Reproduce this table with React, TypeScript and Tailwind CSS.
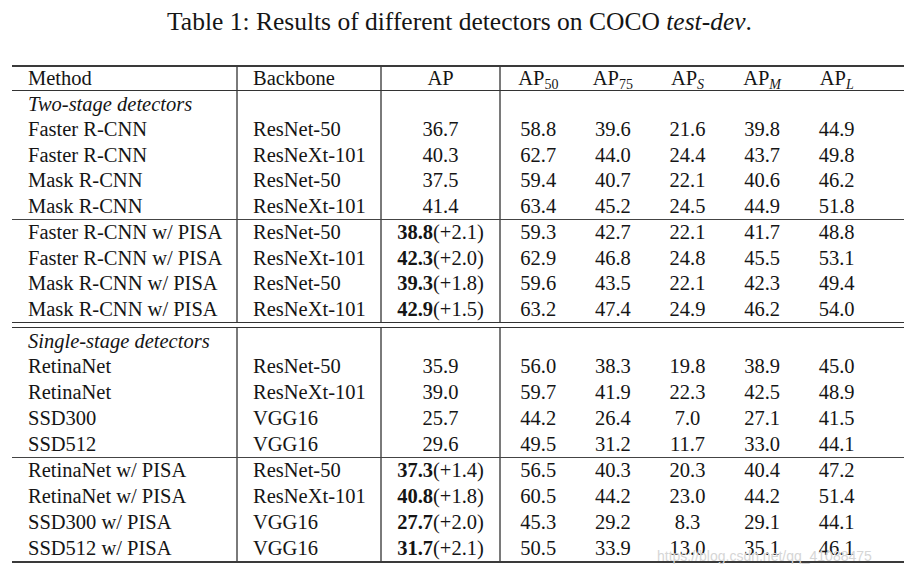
import type { ReactNode } from "react";

type Row = {
  method: ReactNode;
  backbone?: string;
  ap?: string;
  gain?: string;
  vals?: string[];
};

const TWO_STAGE: Row[] = [
  { method: <i>Two-stage detectors</i> },
  { method: "Faster R-CNN", backbone: "ResNet-50", ap: "36.7", vals: ["58.8", "39.6", "21.6", "39.8", "44.9"] },
  { method: "Faster R-CNN", backbone: "ResNeXt-101", ap: "40.3", vals: ["62.7", "44.0", "24.4", "43.7", "49.8"] },
  { method: "Mask R-CNN", backbone: "ResNet-50", ap: "37.5", vals: ["59.4", "40.7", "22.1", "40.6", "46.2"] },
  { method: "Mask R-CNN", backbone: "ResNeXt-101", ap: "41.4", vals: ["63.4", "45.2", "24.5", "44.9", "51.8"] },
];

const TWO_STAGE_PISA: Row[] = [
  { method: "Faster R-CNN w/ PISA", backbone: "ResNet-50", ap: "38.8", gain: "(+2.1)", vals: ["59.3", "42.7", "22.1", "41.7", "48.8"] },
  { method: "Faster R-CNN w/ PISA", backbone: "ResNeXt-101", ap: "42.3", gain: "(+2.0)", vals: ["62.9", "46.8", "24.8", "45.5", "53.1"] },
  { method: "Mask R-CNN w/ PISA", backbone: "ResNet-50", ap: "39.3", gain: "(+1.8)", vals: ["59.6", "43.5", "22.1", "42.3", "49.4"] },
  { method: "Mask R-CNN w/ PISA", backbone: "ResNeXt-101", ap: "42.9", gain: "(+1.5)", vals: ["63.2", "47.4", "24.9", "46.2", "54.0"] },
];

const SINGLE_STAGE: Row[] = [
  { method: <i>Single-stage detectors</i> },
  { method: "RetinaNet", backbone: "ResNet-50", ap: "35.9", vals: ["56.0", "38.3", "19.8", "38.9", "45.0"] },
  { method: "RetinaNet", backbone: "ResNeXt-101", ap: "39.0", vals: ["59.7", "41.9", "22.3", "42.5", "48.9"] },
  { method: "SSD300", backbone: "VGG16", ap: "25.7", vals: ["44.2", "26.4", "7.0", "27.1", "41.5"] },
  { method: "SSD512", backbone: "VGG16", ap: "29.6", vals: ["49.5", "31.2", "11.7", "33.0", "44.1"] },
];

const SINGLE_STAGE_PISA: Row[] = [
  { method: "RetinaNet w/ PISA", backbone: "ResNet-50", ap: "37.3", gain: "(+1.4)", vals: ["56.5", "40.3", "20.3", "40.4", "47.2"] },
  { method: "RetinaNet w/ PISA", backbone: "ResNeXt-101", ap: "40.8", gain: "(+1.8)", vals: ["60.5", "44.2", "23.0", "44.2", "51.4"] },
  { method: "SSD300 w/ PISA", backbone: "VGG16", ap: "27.7", gain: "(+2.0)", vals: ["45.3", "29.2", "8.3", "29.1", "44.1"] },
  { method: "SSD512 w/ PISA", backbone: "VGG16", ap: "31.7", gain: "(+2.1)", vals: ["50.5", "33.9", "13.0", "35.1", "46.1"] },
];

const VLINE = "border-r-2 border-[#7a7a7a]";

function TableRow({
  method,
  backbone,
  ap,
  gain,
  vals,
  height,
}: Row & { height: string }) {
  return (
    <div className={`flex items-center ${height}`}>
      <div className={`flex h-full w-[226px] shrink-0 items-center pl-4 ${VLINE}`}>
        {method}
      </div>
      <div className={`flex h-full w-[144px] shrink-0 items-center pl-[15px] ${VLINE}`}>
        {backbone}
      </div>
      <div className={`flex h-full w-[119px] shrink-0 items-center justify-center ${VLINE}`}>
        {ap ? (
          gain ? (
            <span>
              <b>{ap}</b>
              {gain}
            </span>
          ) : (
            ap
          )
        ) : null}
      </div>
      {(vals ?? ["", "", "", "", ""]).map((v, i) => (
        <div key={i} className="flex h-full w-[74.6px] shrink-0 items-center justify-center">
          {v}
        </div>
      ))}
      <div className="flex-1" />
    </div>
  );
}

function Ap({ sub, italic = false }: { sub: string; italic?: boolean }) {
  return (
    <span>
      AP
      <sub className={`text-[14px] ${italic ? "italic" : ""}`}>{sub}</sub>
    </span>
  );
}

function Group({ rows, height }: { rows: Row[]; height: string }) {
  return (
    <div>
      {rows.map((r, i) => (
        <TableRow key={i} {...r} height={height} />
      ))}
    </div>
  );
}

export default function App() {
  return (
    <div className="relative h-[578px] w-[909px] overflow-hidden bg-white font-['Liberation_Serif',serif] text-[20.5px] leading-none text-[#151515]">
      <div className="flex h-[44px] items-center justify-center pl-[10px] text-[25.5px]">
        <span>
          Table 1: Results of different detectors on COCO <i>test-dev</i>.
        </span>
      </div>

      <div className="ml-3 mt-[21px] w-[892px] border-y-2 border-[#3a3a3a]">
        <div className="flex h-[24px] items-center border-b border-[#333]">
          <div className={`flex h-full w-[226px] shrink-0 items-center pl-4 ${VLINE}`}>Method</div>
          <div className={`flex h-full w-[144px] shrink-0 items-center pl-[15px] ${VLINE}`}>Backbone</div>
          <div className={`flex h-full w-[119px] shrink-0 items-center justify-center ${VLINE}`}>AP</div>
          <div className="flex h-full w-[74.6px] shrink-0 items-center justify-center">
            <Ap sub="50" />
          </div>
          <div className="flex h-full w-[74.6px] shrink-0 items-center justify-center">
            <Ap sub="75" />
          </div>
          <div className="flex h-full w-[74.6px] shrink-0 items-center justify-center">
            <Ap sub="S" italic />
          </div>
          <div className="flex h-full w-[74.6px] shrink-0 items-center justify-center">
            <Ap sub="M" italic />
          </div>
          <div className="flex h-full w-[74.6px] shrink-0 items-center justify-center">
            <Ap sub="L" italic />
          </div>
          <div className="flex-1" />
        </div>

        <div className="border-b border-[#444]">
          <Group rows={TWO_STAGE} height="h-[25.6px]" />
        </div>
        <Group rows={TWO_STAGE_PISA} height="h-[25.5px]" />

        <div className="h-[6px] border-y border-[#333]" />

        <div className="border-b border-[#444]">
          <Group rows={SINGLE_STAGE} height="h-[25.75px]" />
        </div>
        <Group rows={SINGLE_STAGE_PISA} height="h-[25.75px]" />
      </div>

      <div className="absolute left-[657px] top-[549px] font-['Liberation_Sans',sans-serif] text-[14px] text-[#d6d6d6]">
        https://blog.csdn.net/qq_41088475
      </div>
    </div>
  );
}
